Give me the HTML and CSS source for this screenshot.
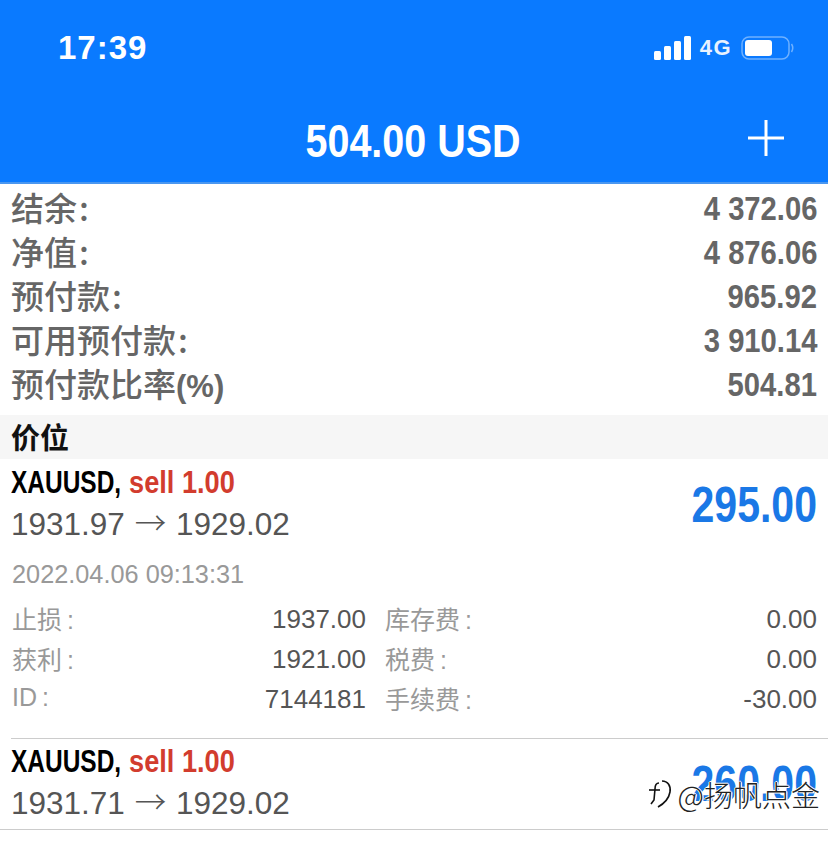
FILE: index.html
```html
<!DOCTYPE html>
<html lang="zh-CN">
<head>
    <meta charset="UTF-8">
    <meta name="viewport" content="width=device-width, initial-scale=1.0">
    <title>504.00 USD</title>
    <link rel="stylesheet" href="styles.css">
</head>
<body>
    <div class="page">
        <header class="topbar">
            <div class="status">
                <span class="clock">17:39</span>
                <div class="status-icons">
                    <svg class="signal" width="37" height="24" viewBox="0 0 37 24">
                        <rect x="0" y="15" width="7" height="9" rx="1.5"/>
                        <rect x="10" y="10" width="7" height="14" rx="1.5"/>
                        <rect x="20" y="5" width="7" height="19" rx="1.5"/>
                        <rect x="30" y="0" width="7" height="24" rx="1.5"/>
                    </svg>
                    <span class="net">4G</span>
                    <svg class="battery" width="53" height="24" viewBox="0 0 53 24">
                        <rect x="1" y="1" width="47" height="22" rx="7" fill="none" stroke="#6fb1ff" stroke-width="1.5"/>
                        <rect x="4" y="4" width="27" height="16" rx="3" fill="#fff"/>
                        <path d="M50.5 8 q2.5 4 0 8" fill="none" stroke="#6fb1ff" stroke-width="1.5"/>
                    </svg>
                </div>
            </div>
            <div class="titlebar">
                <span class="title">504.00 USD</span>
                <svg class="plus" width="36" height="36" viewBox="0 0 36 36">
                    <path d="M18 0V36M0 18H36" stroke="#fff" stroke-width="3"/>
                </svg>
            </div>
        </header>

        <section class="summary">
            <div class="sum-row"><span class="sum-label">结余&#8202;:</span><span class="sum-value">4 372.06</span></div>
            <div class="sum-row"><span class="sum-label">净值&#8202;:</span><span class="sum-value">4 876.06</span></div>
            <div class="sum-row"><span class="sum-label">预付款&#8202;:</span><span class="sum-value">965.92</span></div>
            <div class="sum-row"><span class="sum-label">可用预付款&#8202;:</span><span class="sum-value">3 910.14</span></div>
            <div class="sum-row"><span class="sum-label">预付款比率<span class="sum-pct">(%)</span></span><span class="sum-value">504.81</span></div>
        </section>

        <h2 class="section-head">价位</h2>

        <article class="trade">
            <div class="trade-top">
                <div>
                    <div class="trade-name"><b>XAUUSD,</b><em>sell 1.00</em></div>
                    <div class="trade-price">1931.97 <span class="arrow">→</span> 1929.02</div>
                </div>
                <span class="profit">295.00</span>
            </div>
            <div class="trade-date">2022.04.06 09:13:31</div>
            <div class="details">
                <span class="d-label">止损&thinsp;:</span><span class="d-value">1937.00</span>
                <span class="d-label">库存费&thinsp;:</span><span class="d-value">0.00</span>
                <span class="d-label">获利&thinsp;:</span><span class="d-value">1921.00</span>
                <span class="d-label">税费&thinsp;:</span><span class="d-value">0.00</span>
                <span class="d-label">ID&thinsp;:</span><span class="d-value">7144181</span>
                <span class="d-label">手续费&thinsp;:</span><span class="d-value">-30.00</span>
            </div>
        </article>

        <article class="trade trade-second">
            <div class="trade-top">
                <div>
                    <div class="trade-name"><b>XAUUSD,</b><em>sell 1.00</em></div>
                    <div class="trade-price">1931.71 <span class="arrow">→</span> 1929.02</div>
                </div>
                <span class="profit">260.00</span>
            </div>
        </article>

        <div class="watermark">
            <svg width="24" height="30" viewBox="0 0 24 30" fill="none" stroke="#111" stroke-width="1.6">
                <path d="M14 2c6 0 9 5 8 11s-5 11-12 15"/>
                <path d="M11 4c-3 0-4 2-4 6l-1 11-3 4"/>
                <path d="M1 11h11"/>
            </svg>
            <span class="mark-text">@扬帆点金</span>
        </div>
    </div>
</body>
</html>
```
FILE: styles.css
```css
html, body {
    margin: 0;
    padding: 0;
    background: #fff;
}
.page {
    position: relative;
    width: 828px;
    height: 841px;
    overflow: hidden;
    font-family: "Liberation Sans", "Noto Sans CJK SC", sans-serif;
    color: #555;
}

/* top bar */
.topbar {
    height: 182px;
    background: #0a7aff;
    border-bottom: 2px solid #4a97f0;
    color: #fff;
}
.status {
    display: flex;
    justify-content: space-between;
    align-items: center;
    height: 60px;
    padding: 18px 34px 0 58px;
}
.clock {
    font-size: 33px;
    font-weight: bold;
    letter-spacing: 1px;
}
.status-icons {
    display: flex;
    align-items: center;
    gap: 9px;
}
.signal {
    fill: #fff;
}
.net {
    font-size: 22px;
    font-weight: bold;
    letter-spacing: 1.5px;
    color: #e8f2ff;
}
.titlebar {
    position: relative;
    display: flex;
    justify-content: center;
    align-items: center;
    height: 48px;
    margin-top: 38px;
}
.title {
    display: inline-block;
    margin-right: 2px;
    font-size: 47px;
    font-weight: bold;
    transform: scaleX(0.84);
    white-space: nowrap;
}
.plus {
    position: absolute;
    right: 44px;
    top: 4px;
}

/* account summary */
.summary {
    padding: 3px 11px 8px 11px;
}
.sum-row {
    display: flex;
    justify-content: space-between;
    align-items: center;
    height: 44px;
}
.sum-label {
    font-family: "Noto Sans CJK SC", sans-serif;
    font-size: 33px;
    font-weight: 500;
    line-height: 40px;
    margin-top: -4px;
    color: #666;
}
.sum-pct {
    font-family: "Liberation Sans", sans-serif;
    font-size: 31px;
    font-weight: bold;
    line-height: 0;
}
.sum-value {
    display: inline-block;
    font-size: 33px;
    font-weight: bold;
    color: #666;
    transform: scaleX(0.885);
    transform-origin: right center;
    white-space: nowrap;
}
.section-head {
    height: 44px;
    margin: 0 0 1px;
    padding-left: 11px;
    background: #f6f6f6;
    color: #111;
    font-size: 29px;
    font-weight: bold;
    line-height: 48px;
}

/* positions */
.trade {
    padding: 0 11px;
}
.trade-top {
    display: flex;
    justify-content: space-between;
    align-items: center;
}
.trade-name {
    display: flex;
    height: 46px;
    line-height: 45px;
    font-size: 32px;
    white-space: nowrap;
}
.trade-name b {
    display: inline-block;
    width: 118px;
    color: #000;
    transform: scaleX(0.765);
    transform-origin: left center;
}
.trade-name em {
    display: inline-block;
    color: #d23c2e;
    font-style: normal;
    font-weight: bold;
    transform: scaleX(0.85);
    transform-origin: left center;
}
.trade-price {
    height: 36px;
    line-height: 36px;
    font-size: 31.5px;
    color: #555;
    white-space: nowrap;
}
.arrow {
    margin: 0 1px;
    font-family: "Noto Sans CJK SC", sans-serif;
    font-weight: 300;
    line-height: 0;
}
.profit {
    display: inline-block;
    margin-top: 8px;
    font-size: 50px;
    font-weight: bold;
    color: #1a78e6;
    transform: scaleX(0.82);
    transform-origin: right center;
}
.trade-date {
    margin-top: 16px;
    height: 32px;
    line-height: 32px;
    padding-left: 1px;
    font-size: 25.3px;
    color: #999;
}
.details {
    display: grid;
    grid-template-columns: 130px 225px 18px 1fr 200px;
    grid-auto-rows: 40px;
    margin-top: 9px;
    height: 120px;
    align-items: center;
    font-size: 26px;
}
.d-label {
    margin-bottom: 3px;
    padding-left: 1px;
    font-size: 25px;
    color: #999;
    white-space: nowrap;
}
.d-value {
    color: #555;
    text-align: right;
}
.d-label:nth-child(4n+1) {
    grid-column: 1;
}
.d-value:nth-child(4n+2) {
    grid-column: 2;
}
.d-label:nth-child(4n+3) {
    grid-column: 4;
}
.d-value:nth-child(4n+4) {
    grid-column: 5;
}
.trade-second {
    position: relative;
    height: 92px;
    margin-top: 19px;
}
.trade-second::before {
    content: "";
    display: block;
    height: 1px;
    background: #ccc;
    margin-right: -11px;
}
.trade-second::after {
    content: "";
    position: absolute;
    left: 0;
    right: 0;
    bottom: 0;
    height: 1px;
    background: #ccc;
}

/* watermark over the last row */
.watermark {
    position: absolute;
    right: 8px;
    top: 773px;
    display: flex;
    align-items: center;
    gap: 6px;
}
.mark-text {
    font-family: "Noto Sans CJK SC", sans-serif;
    font-size: 29px;
    font-weight: 300;
    color: #222;
    text-shadow: 1px 1px 0 #fff, -1px 0 0 #fff, 0 -1px 0 #fff, 1px 0 0 #fff;
}
```
